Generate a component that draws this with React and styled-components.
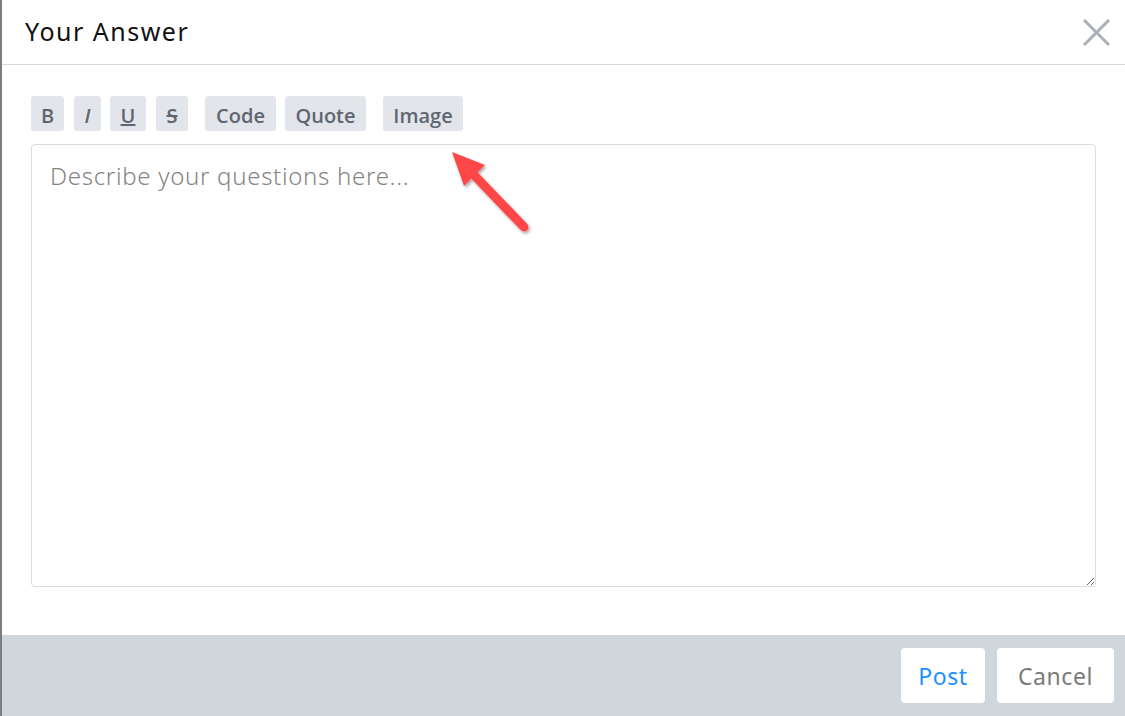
import styled, { createGlobalStyle } from "styled-components"

const Global = createGlobalStyle`
  html, body { margin: 0; padding: 0; background: #fff; }
  body { font-family: "Noto Sans", "Liberation Sans", sans-serif; }
`

const tools = [
  { label: "B", w: 33, gap: 10 },
  { label: "I", w: 27, gap: 9, italic: true },
  { label: "U", w: 36, gap: 10, under: true },
  { label: "S", w: 32, gap: 17, strike: true },
  { label: "Code", w: 71, gap: 9 },
  { label: "Quote", w: 81, gap: 17 },
  { label: "Image", w: 80, gap: 0 },
]

const App = () => {
  return (
    <Modal>
      <Global />
      <Header>
        <Title>Your Answer</Title>
        <Close aria-label="close">
          <svg width="27" height="27" viewBox="0 0 27 27">
            <path d="M2 2 L25 25 M25 2 L2 25" stroke="#a9b0b8" strokeWidth="3" strokeLinecap="square" />
          </svg>
        </Close>
      </Header>
      <Body>
        <Toolbar>
          {tools.map((t) => (
            <ToolBtn key={t.label} $w={t.w} $gap={t.gap} $italic={t.italic} $under={t.under}>
              {t.strike ? <s>{t.label}</s> : t.label}
            </ToolBtn>
          ))}
        </Toolbar>
        <Editor placeholder="Describe your questions here..." />
        <Arrow width="90" height="95" viewBox="0 0 90 95">
          <defs>
            <filter id="sh" x="-20%" y="-20%" width="140%" height="140%">
              <feDropShadow dx="1.5" dy="2" stdDeviation="1.5" floodColor="#000" floodOpacity="0.35" />
            </filter>
          </defs>
          <g filter="url(#sh)">
            <line x1="76" y1="80" x2="26" y2="28" stroke="#ff4646" strokeWidth="9" strokeLinecap="round" />
            <polygon points="4,5 37,18 16,39" fill="#ff4646" />
          </g>
        </Arrow>
      </Body>
      <Footer>
        <FootBtn $primary $w={84}>Post</FootBtn>
        <FootBtn $w={117}>Cancel</FootBtn>
      </Footer>
    </Modal>
  )
}

export default App

const Modal = styled.div`
  width: 1125px;
  height: 716px;
  display: flex;
  flex-direction: column;
  border-left: 2px solid #7d7d7d;
  box-sizing: border-box;
  background: #fff;
  font-family: "Noto Sans", sans-serif;
`

const Header = styled.div`
  height: 64px;
  display: flex;
  align-items: center;
  justify-content: space-between;
  padding: 0 15px 0 23px;
  border-bottom: 1px solid #d5dae1;
  flex-shrink: 0;
`

const Title = styled.h2`
  margin: 0;
  font-size: 25px;
  font-weight: 400;
  color: #111;
  letter-spacing: 1.5px;
  padding-bottom: 3px;
`

const Close = styled.button`
  border: 0;
  background: none;
  padding: 0;
  display: flex;
  cursor: pointer;
`

const Body = styled.div`
  position: relative;
  flex: 1;
  padding: 31px 29px 48px 29px;
  display: flex;
  flex-direction: column;
`

const Toolbar = styled.div`
  display: flex;
  height: 35px;
  margin-bottom: 13px;
`

const ToolBtn = styled.button`
  width: ${(p) => p.$w}px;
  margin-right: ${(p) => p.$gap}px;
  height: 35px;
  border: 0;
  border-radius: 3px;
  background: #e2e5e9;
  color: #5f6670;
  font-family: "Open Sans", sans-serif;
  font-weight: 600;
  font-size: 20px;
  padding: 4px 0 0;
  font-style: ${(p) => (p.$italic ? "italic" : "normal")};
  text-decoration: ${(p) => (p.$under ? "underline" : "none")};
`

const Editor = styled.textarea`
  flex: 1;
  border: 1px solid #dcdcdc;
  border-radius: 4px;
  padding: 14px 18px;
  resize: vertical;
  font-family: "Noto Sans", sans-serif;
  font-size: 24px;
  letter-spacing: 0.7px;
  color: #333;
  outline: none;
  &::placeholder {
    color: #858585;
    font-weight: 300;
  }
`

const Arrow = styled.svg`
  position: absolute;
  left: 446px;
  top: 82px;
`

const Footer = styled.div`
  height: 81px;
  flex-shrink: 0;
  background: #d1d5dc;
  display: flex;
  align-items: center;
  justify-content: flex-end;
  gap: 12px;
  padding: 0 11px 0 0;
`

const FootBtn = styled.button`
  width: ${(p) => p.$w}px;
  height: 55px;
  padding: 0;
  border: 0;
  border-radius: 4px;
  background: #fff;
  font-family: "Noto Sans", sans-serif;
  font-size: 23px;
  letter-spacing: 0.6px;
  color: ${(p) => (p.$primary ? "#1e8fff" : "#7a7a7a")};
`
